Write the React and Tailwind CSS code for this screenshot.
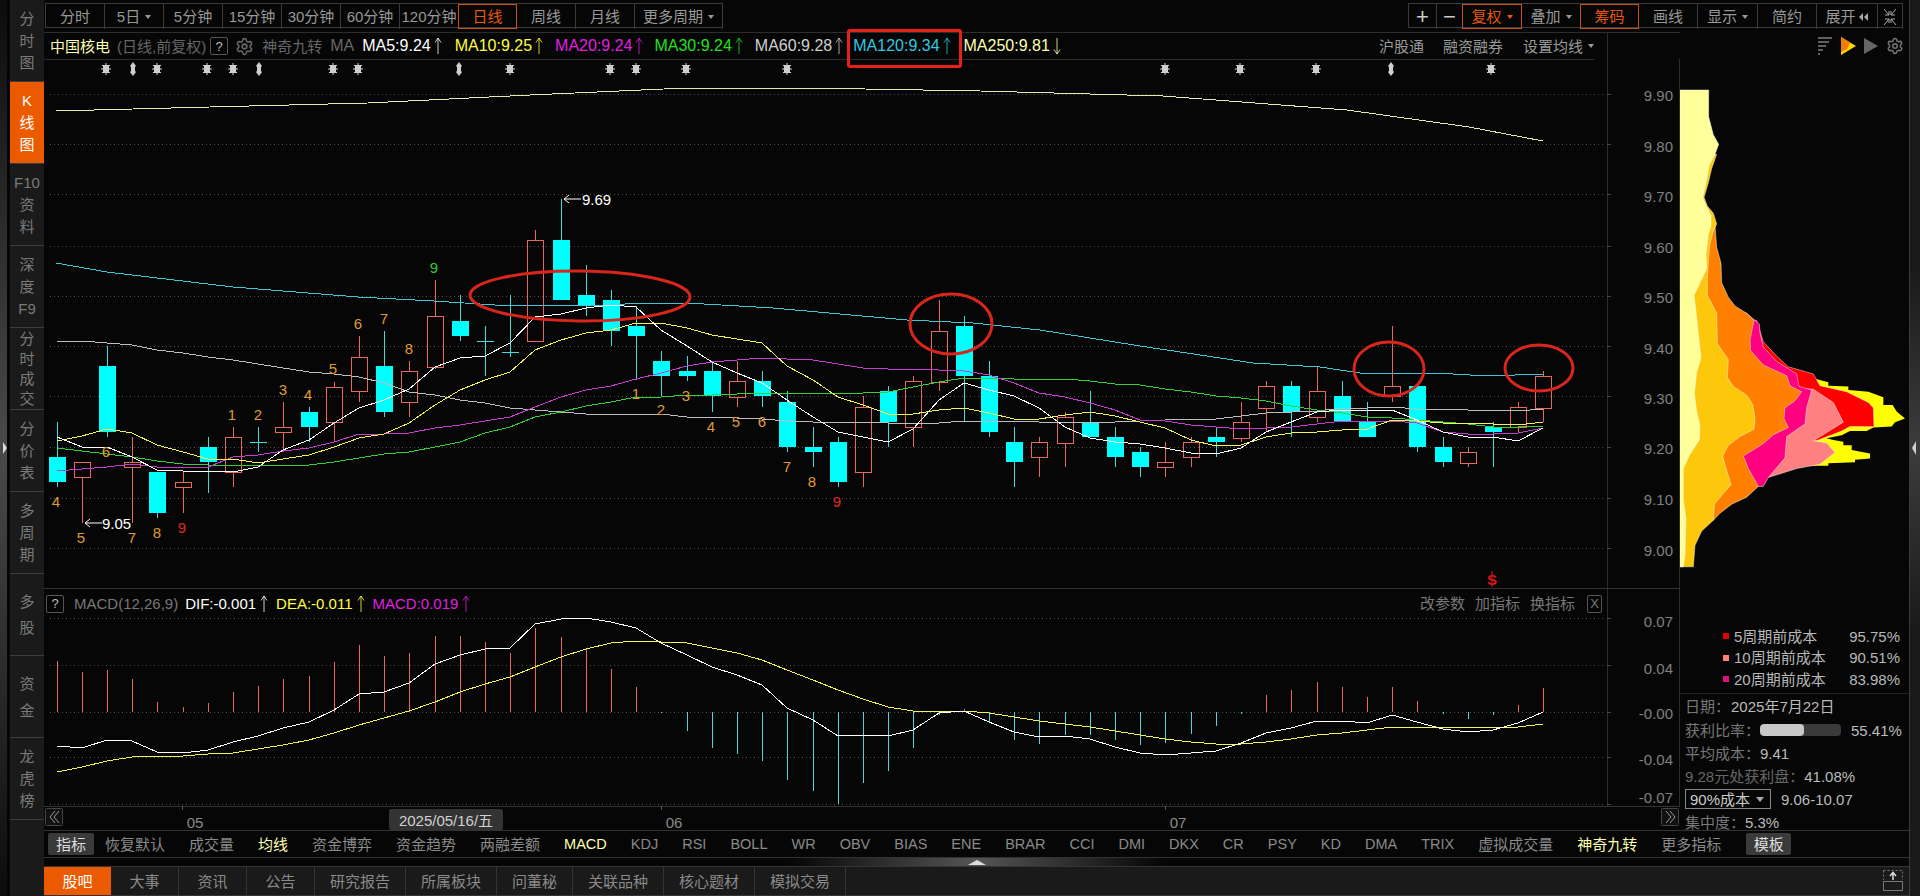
import { Settings } from "lucide-react";

const periods = ["5分钟", "15分钟", "30分钟", "60分钟", "120分钟"];
const indicators = [
  ["恢复默认"], ["成交量"], ["均线", "y"], ["资金博弈"], ["资金趋势"], ["两融差额"], ["MACD", "y"], ["KDJ"], ["RSI"], ["BOLL"], ["WR"], ["OBV"], ["BIAS"], ["ENE"],
  ["BRAR"], ["CCI"], ["DMI"], ["DKX"], ["CR"], ["PSY"], ["KD"], ["DMA"], ["TRIX"], ["虚拟成交量"], ["神奇九转", "y"], ["更多指标"],
];
const tabs = ["大事", "资讯", "公告", "研究报告", "所属板块", "问董秘", "关联品种", "核心题材", "模拟交易"];

// [type, high, bodyTop, bodyBottom, low] in page pixels
const candles = [
  ["c",422,457,482,487],["r",462,462,477,523],["c",346,366,432,437],["r",437,462,467,523],["c",472,472,513,518],["r",472,482,487,513],
  ["c",437,447,462,493],["r",427,437,472,487],["c",427,442,442,452],["r",402,427,432,452],["c",407,412,427,442],["r",382,387,422,442],
  ["r",336,357,391,402],["c",331,366,412,417],["r",361,371,402,417],["r",280,316,367,369],["c",295,321,336,341],["c",326,341,341,376],
  ["c",295,352,352,357],["r",230,240,341,341],["c",199,240,300,300],["c",265,295,305,316],["c",290,300,331,346],["c",306,326,336,380],
  ["c",351,361,376,396],["c",356,371,376,381],["c",361,371,396,412],["r",361,381,397,407],["c",371,381,396,407],["c",391,402,447,452],
  ["c",427,447,452,467],["c",437,442,482,487],["r",396,407,472,487],["c",386,391,422,447],["r",376,381,427,447],["r",300,331,382,391],
  ["c",316,326,376,422],["c",361,376,432,437],["c",427,442,462,487],["r",437,442,457,477],["r",412,417,443,467],["c",391,422,437,437],
  ["c",427,437,457,467],["c",447,452,467,477],["r",442,462,467,477],["r",437,442,457,467],["c",427,437,442,457],["r",402,422,438,442],
  ["r",381,386,408,432],["c",381,386,412,437],["r",367,391,417,422],["c",381,396,421,421],["c",402,422,437,437],["r",326,386,396,402],
  ["c",386,386,447,452],["c",437,447,462,467],["r",447,452,463,467],["c",422,427,432,467],["r",402,407,427,432],["r",371,376,408,422],
];
const ma5 = [437,447,447,457,470,471,471,472,467,450,440,423,408,400,389,367,358,356,343,317,314,308,305,307,330,346,362,373,383,400,417,432,437,442,429,400,383,390,396,408,427,438,442,444,448,453,454,448,432,422,412,410,410,410,420,432,437,437,441,428];
const ma10 = [441,436,429,433,445,452,459,459,463,459,455,447,438,434,423,405,390,380,372,350,340,333,330,323,323,328,335,339,343,366,380,397,405,414,414,410,408,413,419,419,415,412,416,422,428,440,446,445,437,433,432,430,429,420,421,423,423,424,425,422];
const ma20 = [471,469,467,464,467,467,467,457,455,451,448,442,434,434,433,428,425,421,417,407,397,390,386,379,373,366,362,360,358,359,360,364,368,369,369,370,371,375,383,393,397,403,410,420,421,425,427,429,428,427,424,421,421,421,423,432,434,434,433,428];
const ma30 = [448,451,454,457,461,464,465,465,465,466,465,462,458,454,452,447,442,433,427,417,412,406,402,397,397,395,395,394,393,393,393,393,393,392,387,382,378,378,379,379,379,381,384,385,389,392,396,398,401,406,410,413,417,418,420,422,424,427,427,426];
const ma60 = [341,341,343,345,350,353,357,360,364,368,372,374,377,383,392,395,400,403,408,410,412,414,414,415,414,417,417,418,419,421,422,422,422,423,423,423,421,421,421,422,422,422,422,421,420,419,419,416,413,412,411,408,408,407,409,409,410,410,411,409];
const ma120 = "56,263 107,272 233,287 358,297 434,301 510,306 610,305 640,303 687,303 773,308 907,320 973,323 1040,330 1140,346 1187,353 1253,363 1320,367 1360,373 1403,373 1453,374 1487,376 1543,374";
const ma250 = "56,111 210,107 368,103 530,95 686,88 808,88 980,91 1163,96 1347,110 1469,127 1543,141";

const bars = [661,672,670,679,702,707,703,692,686,679,676,662,645,656,653,636,636,642,653,628,637,649,669,687,713,731,748,754,761,780,791,804,783,771,748,715,709,723,740,744,735,735,740,745,743,734,726,714,695,690,682,687,697,687,701,714,719,715,705,688];
const dif = [746,748,740,741,752,753,750,742,736,728,722,710,694,692,683,664,655,649,648,624,619,618,622,628,643,655,667,675,685,708,720,736,735,736,730,713,711,722,732,737,736,739,747,753,755,753,751,743,733,728,721,721,723,715,722,729,732,730,723,712];
const dea = [772,767,761,757,756,756,754,753,749,745,740,733,725,718,711,702,692,684,677,667,657,649,643,641,642,643,648,653,660,670,680,690,699,707,711,712,711,713,717,721,724,727,731,735,739,742,744,744,742,739,735,733,730,727,727,727,727,728,727,724];

const nines = [
  [56,501,"4"],[81,537,"5"],[106,451,"6"],[132,537,"7"],[157,532,"8"],[182,527,"9","#e02b20"],[232,414,"1"],[258,414,"2"],[283,389,"3"],[308,394,"4"],[333,368,"5"],[358,323,"6"],[384,318,"7"],[409,348,"8"],[434,267,"9","#35c832"],
  [636,393,"1"],[661,409,"2"],[686,395,"3"],[711,426,"4"],[736,421,"5"],[762,421,"6"],[787,466,"7"],[812,481,"8"],[837,501,"9","#e02b20"],
];
const stars = [106,157,207,233,333,358,510,610,636,686,787,1165,1240,1316,1491];
const updown = [133,259,459,1391];
const priceTicks = [[94,95,"9.90"],[144,146,"9.80"],[194,196,"9.70"],[246,247,"9.60"],[296,297,"9.50"],[346,348,"9.40"],[396,398,"9.30"],[447,448,"9.20"],[498,499,"9.10"],[548,550,"9.00"]];
const macdTicks = [[618,621,"0.07"],[665,668,"0.04"],[712,713,"-0.00"],[757,759,"-0.04"],[804,797,"-0.07"]];

const cx = (i) => Math.round(56.6 + 25.2 * i);
const line = (ys) => ys.map((y, i) => `${cx(i)},${y}`).join(" ");
const chip = (pts) => pts.map(([x, y]) => `${1600 + x / 3},${40 + y / 2.8}`).join(" ");

const chipYellow = [[240,950],[650,950],[685,958],[685,968],[745,970],[745,980],[805,985],[850,1000],[850,1022],[878,1022],[890,1040],[915,1060],[885,1070],[875,1082],[820,1085],[800,1095],[750,1095],[725,1107],[680,1115],[700,1120],[730,1125],[730,1135],[755,1135],[755,1148],[810,1158],[810,1172],[765,1175],[765,1182],[685,1185],[685,1192],[660,1192],[240,1192]];
const chipRed = [[240,785],[470,785],[490,845],[530,885],[565,915],[640,935],[660,968],[740,985],[805,1015],[820,1030],[822,1083],[750,1082],[725,1095],[655,1120],[645,1122],[240,1122]];
const chipSalmon = [[240,975],[600,975],[640,978],[700,1015],[730,1070],[640,1122],[680,1128],[705,1155],[660,1188],[590,1200],[505,1225],[240,1225]];
const chipPink = [[240,765],[440,765],[478,795],[480,820],[490,860],[530,900],[590,935],[597,970],[635,980],[620,1030],[615,1075],[560,1110],[555,1170],[505,1225],[490,1250],[240,1250]];
const chipOrange = [[240,520],[345,520],[350,580],[363,625],[365,680],[385,720],[405,745],[440,765],[462,785],[450,840],[452,870],[490,910],[560,940],[570,968],[605,985],[585,1010],[555,1030],[552,1060],[565,1085],[520,1105],[490,1130],[430,1165],[445,1200],[475,1250],[440,1280],[395,1300],[360,1325],[340,1345],[240,1345]];
const chipGold = [[240,320],[350,320],[335,360],[325,400],[312,440],[322,465],[340,485],[350,515],[340,535],[330,570],[325,620],[322,660],[322,715],[350,765],[352,850],[385,895],[382,945],[400,970],[440,995],[458,1020],[465,1060],[462,1090],[420,1110],[385,1135],[368,1165],[378,1200],[393,1245],[365,1275],[343,1300],[340,1345],[305,1375],[285,1415],[280,1475],[240,1475]];
const chipPale = [[240,140],[326,140],[326,215],[340,265],[356,292],[345,320],[328,350],[318,400],[308,440],[318,465],[333,490],[333,520],[325,545],[318,600],[320,640],[300,680],[282,715],[288,760],[295,820],[303,890],[290,930],[283,990],[290,1040],[300,1080],[298,1120],[270,1160],[250,1200],[250,1290],[258,1340],[255,1440],[250,1475],[240,1475]];

function Arrow({ color, down }) {
  return (
    <svg width="8" height="18" viewBox="0 0 8 18" className="shrink-0" fill="none" stroke={color} strokeWidth="0.8">
      {down ? <path d="M4 1V17M1 12.5L4 17L7 12.5" /> : <path d="M4 1V17M1 5.5L4 1L7 5.5" />}
    </svg>
  );
}

function Caret({ color = "#999" }) {
  return <span className="ml-[5px] inline-block h-0 w-0 border-x-[3px] border-t-[4px] border-x-transparent" style={{ borderTopColor: color }} />;
}

function Btn({ children, active, className = "w-[59px]" }) {
  return (
    <div className={`flex h-[25px] shrink-0 items-center justify-center border-r ${active ? "-ml-px border border-[#c8531a] text-[#e8590c]" : "border-[#3a3a3a]"} ${className}`}>
      {children}
    </div>
  );
}

function SideTab({ chars, active, gap = "gap-0", leading = "leading-[22px]" }) {
  return (
    <div className={`flex h-[82px] flex-col items-center justify-center border-b border-[#3d3d3d] ${gap} ${leading} ${active ? "bg-[#ec5a00] text-white" : "text-[#7a7a7a]"}`}>
      {chars.map((c) => <span key={c}>{c}</span>)}
    </div>
  );
}

function MaLabel({ text, color, down, className = "" }) {
  return (
    <div className={`flex items-center gap-[3px] ${className}`} style={{ color }}>
      <span className="text-[16px]">{text}</span>
      <Arrow color={color} down={down} />
    </div>
  );
}

function Marker({ x, kind }) {
  if (kind === "updown") {
    return <path d={`M${x} 62L${x + 3} 66L${x + 2} 67V71L${x + 3} 72L${x} 76L${x - 3} 72L${x - 2} 71V67L${x - 3} 66Z`} fill="#cfcfcf" />;
  }
  return (
    <g stroke="#cfcfcf" fill="#cfcfcf">
      <rect x={x - 3} y={65} width="6" height="8" stroke="none" />
      <path d={`M${x} 63V75M${x - 5} 69H${x + 5}M${x - 4} 65L${x + 4} 73M${x + 4} 65L${x - 4} 73`} />
    </g>
  );
}

function MainChart() {
  return (
    <svg width="1636" height="529" viewBox="44 59 1636 529" className="block font-['Liberation_Sans',sans-serif]">
      <path d="M1607.5 59V588M1679.5 59V588" stroke="#2c2c2c" />
      {priceTicks.map(([y, ty, t]) => (
        <g key={t}>
          <line x1="50" x2="1603" y1={y + 0.5} y2={y + 0.5} stroke="#505050" strokeDasharray="1 3" />
          <line x1="1607" x2="1611" y1={y + 0.5} y2={y + 0.5} stroke="#444" />
          <text x="1673" y={ty} textAnchor="end" dominantBaseline="central" fontSize="15" fill="#808080">{t}</text>
        </g>
      ))}
      {stars.map((x) => <Marker key={x} x={x} />)}
      {updown.map((x) => <Marker key={x} x={x} kind="updown" />)}

      <polyline points={ma250} fill="none" stroke="#e8e8a8" shapeRendering="crispEdges" />
      <polyline points={ma120} fill="none" stroke="#3fc6d8" shapeRendering="crispEdges" />
      <g shapeRendering="crispEdges">
        {candles.map(([type, high, top, bottom, low], i) => {
          const x = cx(i);
          if (type === "c") {
            return (
              <g key={i}>
                <line x1={x + 0.5} x2={x + 0.5} y1={high} y2={low} stroke="#3fdede" />
                {bottom - top < 2
                  ? <line x1={x - 8} x2={x + 9} y1={top + 0.5} y2={top + 0.5} stroke="#3fdede" />
                  : <rect x={x - 8} y={top} width="17" height={bottom - top} fill="#00ffff" />}
              </g>
            );
          }
          return (
            <g key={i} stroke="#e8685e" fill="none">
              <line x1={x + 0.5} x2={x + 0.5} y1={high} y2={top} />
              <line x1={x + 0.5} x2={x + 0.5} y1={bottom} y2={low} />
              <rect x={x - 7.5} y={top + 0.5} width="16" height={bottom - top} />
            </g>
          );
        })}
      </g>
      <g fill="none" shapeRendering="crispEdges">
        <polyline points={line(ma60)} stroke="#bdbdbd" />
        <polyline points={line(ma30)} stroke="#35d035" />
        <polyline points={line(ma20)} stroke="#c83cd0" />
        <polyline points={line(ma10)} stroke="#f5f550" />
        <polyline points={line(ma5)} stroke="#ffffff" />
      </g>

      {nines.map(([x, y, t, c], i) => (
        <text key={i} x={x} y={y} textAnchor="middle" dominantBaseline="central" fontSize="15" fill={c || "#e09a32"}>{t}</text>
      ))}
      <path d="M581 199H564M569 195L564 199L569 203M102 523H85M90 519L85 523L90 527" fill="none" stroke="#fff" />
      <text x="582" y="199" dominantBaseline="central" fontSize="15" fill="#fff">9.69</text>
      <text x="102" y="523" dominantBaseline="central" fontSize="15" fill="#fff">9.05</text>
      <text x="1492" y="579" textAnchor="middle" dominantBaseline="central" fontSize="15" fontWeight="700" fill="#e01414">S</text>
      <path d="M1492 571V587" stroke="#e01414" />

      <g fill="none" stroke="#d9261c" strokeWidth="3">
        <ellipse cx="580" cy="296" rx="110" ry="25" transform="rotate(0.5 580 296)" />
        <ellipse cx="951" cy="324" rx="41" ry="30" />
        <ellipse cx="1389" cy="369" rx="35" ry="27" />
        <ellipse cx="1539" cy="368" rx="34" ry="23" />
      </g>
    </svg>
  );
}

function MacdChart() {
  return (
    <svg width="1636" height="188" viewBox="44 618 1636 188" className="block overflow-visible font-['Liberation_Sans',sans-serif]">
      <path d="M1607.5 618V806M1679.5 618V806" stroke="#2c2c2c" />
      {macdTicks.map(([y, ty, t]) => (
        <g key={t}>
          <line x1="50" x2="1603" y1={y + 0.5} y2={y + 0.5} stroke="#505050" strokeDasharray="1 3" />
          <line x1="1607" x2="1611" y1={y + 0.5} y2={y + 0.5} stroke="#444" />
          <text x="1673" y={ty} textAnchor="end" dominantBaseline="central" fontSize="15" fill="#808080">{t}</text>
        </g>
      ))}
      <g shapeRendering="crispEdges">
        {bars.map((y, i) => (
          <line key={i} x1={cx(i) + 0.5} x2={cx(i) + 0.5} y1={712} y2={y} stroke={y < 712 ? "#e8685e" : "#4dd8d8"} />
        ))}
        <polyline points={line(dea)} fill="none" stroke="#f5f550" />
        <polyline points={line(dif)} fill="none" stroke="#ffffff" />
      </g>
    </svg>
  );
}

function TimeAxis() {
  return (
    <svg width="1636" height="24" viewBox="44 806 1636 24" className="block font-['Liberation_Sans',sans-serif] text-[15px]">
      <path d="M44 806.5H1680" stroke="#333" />
      <path d="M182.5 806V810M661.5 806V810M1165.5 806V810" stroke="#555" />
      <rect x="45.5" y="808.5" width="17" height="17" rx="1" fill="#111" stroke="#444" />
      <path d="M55 811L50 817L55 823M59 811L54 817L59 823" fill="none" stroke="#999" />
      <rect x="1661.5" y="808.5" width="17" height="17" rx="1" fill="#111" stroke="#444" />
      <path d="M1666 811L1671 817L1666 823M1670 811L1675 817L1670 823" fill="none" stroke="#999" />
      <text x="195" y="822" textAnchor="middle" dominantBaseline="central" fill="#8a8a8a">05</text>
      <text x="674" y="822" textAnchor="middle" dominantBaseline="central" fill="#8a8a8a">06</text>
      <text x="1178" y="822" textAnchor="middle" dominantBaseline="central" fill="#8a8a8a">07</text>
      <rect x="389" y="809" width="114" height="21" rx="2" fill="#333" />
      <text x="446" y="820" textAnchor="middle" dominantBaseline="central" fill="#d0d0d0" fontFamily="'Liberation Sans','Noto Sans CJK SC',sans-serif">2025/05/16/五</text>
    </svg>
  );
}

function ChipChart() {
  return (
    <svg width="229" height="557" viewBox="1680 32 229 557" className="block">
      <path d="M1818 38H1832M1818 42H1829M1818 46H1826M1818 50H1823M1818 54H1820" stroke="#808080" strokeWidth="1.5" />
      <polygon points="1841,37 1856,46 1841,55" fill="#ffd400" />
      <polygon points="1841,37 1850,42.5 1847,49 1841,52" fill="#f07c00" />
      <polygon points="1864,38 1878,46 1864,54" fill="#666" />
      <Settings x={1886} y={37} size={18} color="#777" strokeWidth={2} />
      <g stroke="#fff" strokeWidth="0.6" strokeOpacity="0.75">
        <polygon points={chip(chipYellow)} fill="#ffff00" stroke="none" />
        <polygon points={chip(chipRed)} fill="#ff0000" />
        <polygon points={chip(chipSalmon)} fill="#ff8080" />
        <polygon points={chip(chipPink)} fill="#ff0080" />
        <polygon points={chip(chipOrange)} fill="#ff8000" />
        <polygon points={chip(chipGold)} fill="#fdc70c" />
        <polygon points={chip(chipPale)} fill="#ffff99" />
      </g>
    </svg>
  );
}

function CostRow({ color, label, value }) {
  return (
    <div className="flex h-[21.5px] items-center pl-[43px] pr-[9px]">
      <span className="h-[6px] w-[6px] shrink-0" style={{ backgroundColor: color }} />
      <span className="ml-[5px]">{label}</span>
      <span className="ml-auto">{value}</span>
    </div>
  );
}

export default function App() {
  return (
    <div className="flex h-[896px] w-[1920px] overflow-hidden bg-[#060606] font-['Liberation_Sans','Noto_Sans_CJK_SC',sans-serif] text-[15px] leading-none text-[#999]">
      {/* left rail */}
      <div className="flex w-[44px] shrink-0">
        <div className="flex w-[7px] items-center justify-end bg-[linear-gradient(180deg,#0c0c0c_0%,#4a4a4a_50%,#0c0c0c_100%)]">
          <span className="h-0 w-0 border-y-[6px] border-l-[4px] border-y-transparent border-l-[#d8d8d8]" />
        </div>
        <div className="ml-[3px] w-[34px] bg-[#1a1a1a]">
          <SideTab chars={["分", "时", "图"]} />
          <SideTab chars={["K", "线", "图"]} active />
          <SideTab chars={["F10", "资", "料"]} />
          <SideTab chars={["深", "度", "F9"]} />
          <SideTab chars={["分", "时", "成", "交"]} leading="leading-[20px]" />
          <SideTab chars={["分", "价", "表"]} />
          <SideTab chars={["多", "周", "期"]} />
          <SideTab chars={["多", "股"]} leading="leading-[26px]" />
          <SideTab chars={["资", "金"]} leading="leading-[27px]" />
          <SideTab chars={["龙", "虎", "榜"]} />
        </div>
      </div>

      <div className="flex w-[1865px] shrink-0 flex-col">
        {/* toolbar */}
        <div className="flex h-[32px] items-start pt-[3px]">
          <div className="ml-px flex h-[25px] border-y border-l border-[#3a3a3a]">
            <Btn>分时</Btn>
            <Btn>5日<Caret /></Btn>
            {periods.map((p) => <Btn key={p}>{p}</Btn>)}
            <Btn active>日线</Btn>
            <Btn>周线</Btn>
            <Btn>月线</Btn>
            <Btn className="w-[88px]">更多周期<Caret /></Btn>
          </div>
          <div className="ml-[685px] flex h-[25px] border-y border-l border-[#3a3a3a]">
            <Btn className="w-[28px] text-[22px] text-[#ccc]">+</Btn>
            <Btn className="w-[26px] text-[22px] text-[#ccc]">−</Btn>
            <Btn active className="w-[60px]">复权<Caret color="#e8590c" /></Btn>
            <Btn>叠加<Caret /></Btn>
            <Btn active>筹码</Btn>
            <Btn>画线</Btn>
            <Btn className="w-[60px]">显示<Caret /></Btn>
            <Btn>简约</Btn>
            <Btn className="w-[61px]">
              展开
              <svg width="10" height="10" viewBox="0 0 10 10" fill="#aaa" className="ml-[3px]"><path d="M4 1L0 5L4 9ZM9 1L5 5L9 9Z" /></svg>
            </Btn>
            <Btn className="w-[25px]">
              <svg width="16" height="18" viewBox="0 0 16 18" fill="none" stroke="#aaa"><path d="M2 1L7 7M7 3V7H3M14 1L9 7M9 3V7H13M2 17L7 11M7 15V11H3M14 17L9 11M9 15V11H13" /></svg>
            </Btn>
          </div>
        </div>

        <div className="flex h-[798px]">
          <div className="w-[1636px] shrink-0">
            {/* MA row */}
            <div className="relative flex h-[27px] border-t border-[#2c2c2c]">
              <div className="flex h-[27px] w-[1550px] items-center border-b border-[#2c2c2c] pl-[6px]">
                <span className="text-[#ffffb0]">中国核电</span>
                <span className="ml-[7px] text-[#666]">(日线,前复权)</span>
                <span className="ml-[4px] flex h-[18px] w-[18px] items-center justify-center rounded-[2px] border border-[#555] text-[13px] text-[#bbb]">?</span>
                <Settings size={19} color="#666" strokeWidth={2} className="ml-[7px]" />
                <span className="ml-[8px] text-[#666]">神奇九转</span>
                <span className="ml-[8px] text-[16px] text-[#666]">MA</span>
                <MaLabel text="MA5:9.24" color="#ffffff" className="ml-[8px]" />
                <MaLabel text="MA10:9.25" color="#ffff40" className="ml-[13px]" />
                <MaLabel text="MA20:9.24" color="#e020e0" className="ml-[12px]" />
                <MaLabel text="MA30:9.24" color="#20e020" className="ml-[11px]" />
                <MaLabel text="MA60:9.28" color="#d0d0d0" className="ml-[12px]" />
                <MaLabel text="MA120:9.34" color="#30c8e0" className="ml-[10px]" />
                <MaLabel text="MA250:9.81" color="#ffffb0" down className="ml-[13px]" />
                <span className="ml-auto">沪股通</span>
                <span className="ml-[19px]">融资融券</span>
                <span className="ml-[20px]">设置均线</span>
                <Caret />
              </div>
              <div className="ml-[13px] w-px bg-[#2c2c2c]" />
              <div className="absolute left-[803px] top-[-4px] h-[39px] w-[115px] rounded-[3px] border-[3px] border-[#e8201a]" />
            </div>
            <MainChart />

            {/* MACD header */}
            <div className="flex h-[30px] w-[1636px] items-center border-t border-[#333]">
              <div className="flex w-[1558px] items-center pl-[2px]">
                <span className="flex h-[18px] w-[18px] items-center justify-center rounded-[2px] border border-[#555] text-[13px] text-[#bbb]">?</span>
                <span className="ml-[10px] text-[#777]">MACD(12,26,9)</span>
                <span className="ml-[7px] text-[#fff]">DIF:-0.001</span>
                <span className="ml-[4px]"><Arrow color="#fff" /></span>
                <span className="ml-[8px] text-[#ffff40]">DEA:-0.011</span>
                <span className="ml-[4px]"><Arrow color="#ffff40" /></span>
                <span className="ml-[8px] text-[#e020e0]">MACD:0.019</span>
                <span className="ml-[4px]"><Arrow color="#e020e0" /></span>
                <span className="ml-auto text-[#777]">改参数</span>
                <span className="ml-[10px] text-[#777]">加指标</span>
                <span className="ml-[10px] text-[#777]">换指标</span>
                <span className="ml-[12px] flex h-[18px] w-[15px] items-center justify-center rounded-[2px] border border-[#555] text-[13px] text-[#777]">X</span>
              </div>
              <div className="ml-[5px] h-full w-px bg-[#2c2c2c]" />
              <div className="ml-[71px] h-full w-px bg-[#2c2c2c]" />
            </div>
            <MacdChart />
            <TimeAxis />
          </div>

          {/* chip distribution */}
          <div className="w-[229px] shrink-0">
            <ChipChart />
            <div className="flex h-[105px] flex-col justify-end border-b border-[#222] pb-[3px] text-[#b8b8b8]">
              <CostRow color="#e00000" label="5周期前成本" value="95.75%" />
              <CostRow color="#ff8080" label="10周期前成本" value="90.51%" />
              <CostRow color="#e0107a" label="20周期前成本" value="83.98%" />
            </div>
            <div className="flex flex-col pl-[5px] pt-[1px] text-[#777]">
              <div className="flex h-[23px] items-center">日期：<span className="ml-[1px] text-[#bbb]">2025年7月22日</span></div>
              <div className="flex h-[24px] items-center">
                获利比率：
                <div className="h-[12px] w-[81px] overflow-hidden rounded-[4px] bg-[#3a3a3a]">
                  <div className="h-full w-[44px] rounded-[4px] bg-[#c8c8c8]" />
                </div>
                <span className="ml-[10px] text-[#bbb]">55.41%</span>
              </div>
              <div className="flex h-[23px] items-center">平均成本：<span className="text-[#bbb]">9.41</span></div>
              <div className="flex h-[23px] items-center text-[#666]">9.28元处获利盘：<span className="text-[#bbb]">41.08%</span></div>
              <div className="flex h-[22px] items-center text-[#bbb]">
                <div className="flex h-[20px] w-[86px] items-center border border-[#888] pl-[4px] text-[#ccc]">
                  90%成本
                  <span className="ml-[6px] h-0 w-0 border-x-[4px] border-t-[5px] border-x-transparent border-t-[#aaa]" />
                </div>
                <span className="ml-[10px]">9.06-10.07</span>
              </div>
              <div className="flex h-[24px] items-center">集中度：<span className="text-[#bbb]">5.3%</span></div>
            </div>
          </div>
        </div>

        {/* indicator bar */}
        <div className="flex h-[27px] items-center border-t border-[#333]">
          <div className="ml-[4px] flex h-[22px] w-[46px] items-center justify-center rounded-[2px] bg-[#3a3a3a] text-[#ddd]">指标</div>
          <div className="ml-[11px] flex gap-6 whitespace-nowrap text-[14.5px]">
            {indicators.map(([name, tone]) => (
              <span key={name} className={`${/[一-龥]/.test(name) ? "text-[15px]" : ""} ${tone === "y" ? "text-[#ffffb0]" : "text-[#8a8a8a]"}`}>{name}</span>
            ))}
          </div>
          <div className="ml-[25px] flex h-[22px] w-[45px] items-center justify-center rounded-[2px] bg-[#3a3a3a] text-[#ddd]">模板</div>
        </div>

        {/* splitter */}
        <div className="flex h-[9px] items-center justify-center border-t border-[#333] bg-[linear-gradient(90deg,#060606_40%,#555_50%,#060606_60%)]">
          <span className="h-0 w-0 border-x-[9px] border-b-[5px] border-x-transparent border-b-[#ddd]" />
        </div>

        {/* bottom tabs */}
        <div className="flex h-[30px] border-y border-[#333] bg-[#1a1a1a]">
          <div className="flex w-[67px] items-center justify-center bg-[#ec5a00] text-white">股吧</div>
          {tabs.map((t) => (
            <div key={t} className="flex min-w-[68px] items-center justify-center border-r border-[#333] px-[15px] text-[#8a8a8a]">{t}</div>
          ))}
          <svg width="20" height="22" viewBox="0 0 20 22" fill="none" className="ml-auto mr-[6px] mt-[3px]" stroke="#777">
            <path d="M0.5 0.5H19.5V10" strokeDasharray="2 2" />
            <path d="M0.5 0.5V10" strokeDasharray="2 2" />
            <rect x="0.5" y="11.5" width="19" height="9" />
            <path d="M10 10V4M7 6L10 2.5L13 6" stroke="#ddd" strokeWidth="1.5" />
          </svg>
        </div>
      </div>

      {/* right strip */}
      <div className="flex w-[11px] shrink-0 items-center border-l border-[#3a3a3a] bg-[linear-gradient(180deg,#1a1a1a_30%,#3c3c3c_50%,#1a1a1a_70%)] pl-[2px]">
        <span className="h-0 w-0 border-y-[7px] border-r-[4px] border-y-transparent border-r-[#cfcfcf]" />
      </div>
    </div>
  );
}
